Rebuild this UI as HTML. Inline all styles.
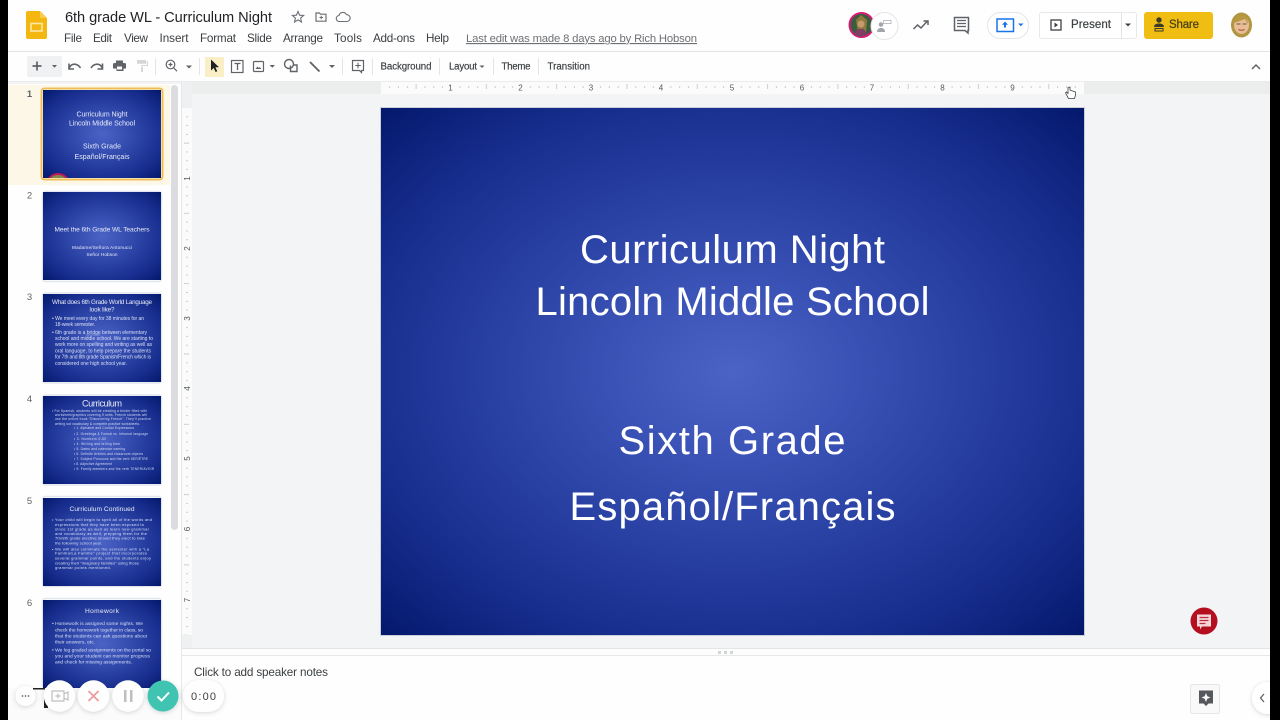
<!DOCTYPE html>
<html><head><meta charset="utf-8"><title>6th grade WL - Curriculum Night</title>
<style>
html,body{margin:0;padding:0;background:#000;width:1280px;height:720px;overflow:hidden}
svg{display:block;filter:blur(.35px)}
text{font-family:"Liberation Sans",sans-serif}
</style></head><body>
<svg xmlns="http://www.w3.org/2000/svg" width="1280" height="720" viewBox="0 0 1280 720">
<defs>
<radialGradient id="g" cx="0.5" cy="0.5" r="0.7">
<stop offset="0" stop-color="#4c63c6"/><stop offset="0.25" stop-color="#3a52b5"/><stop offset="0.5" stop-color="#2840a2"/><stop offset="0.75" stop-color="#182e8e"/><stop offset="1" stop-color="#04196e"/>
</radialGradient>
<filter id="b" x="-5%" y="-5%" width="110%" height="110%"><feGaussianBlur stdDeviation="0.2"/></filter>
<filter id="sh" x="-30%" y="-30%" width="160%" height="160%"><feDropShadow dx="0" dy="1" stdDeviation="2.500" flood-color="#000" flood-opacity=".16"/></filter>
<pattern id="hr" x="381" y="0" width="70.3" height="20" patternUnits="userSpaceOnUse">
<g fill="#c0c2c5"><rect x="8.3" y="6" width=".8" height="2"/><rect x="17.1" y="6" width=".8" height="2"/><rect x="25.9" y="6" width=".8" height="2"/><rect x="34.7" y="4" width=".8" height="5"/><rect x="43.5" y="6" width=".8" height="2"/><rect x="52.3" y="6" width=".8" height="2"/><rect x="61.1" y="6" width=".8" height="2"/></g>
</pattern>
<pattern id="vr" x="0" y="108" width="20" height="70.3" patternUnits="userSpaceOnUse">
<g fill="#c0c2c5"><rect x="186" y="8.3" width="2" height=".8"/><rect x="186" y="17.1" width="2" height=".8"/><rect x="186" y="25.9" width="2" height=".8"/><rect x="184" y="34.7" width="5" height=".8"/><rect x="186" y="43.5" width="2" height=".8"/><rect x="186" y="52.3" width="2" height=".8"/><rect x="186" y="61.1" width="2" height=".8"/></g>
</pattern>
<pattern id="vr2" x="180" y="108" width="20" height="70.3" patternUnits="userSpaceOnUse">
<g fill="#c0c2c5"><rect x="6" y="8.3" width="2" height=".8"/><rect x="6" y="17.1" width="2" height=".8"/><rect x="6" y="25.9" width="2" height=".8"/><rect x="4" y="34.7" width="5" height=".8"/><rect x="6" y="43.5" width="2" height=".8"/><rect x="6" y="52.3" width="2" height=".8"/><rect x="6" y="61.1" width="2" height=".8"/></g>
</pattern>
</defs>

<!-- base -->
<rect x="0" width="1280" height="720" fill="#fefefe"/>
<rect x="192" y="94" width="1078" height="554" fill="#f3f4f6"/>
<rect x="182" y="82" width="1088" height="12" fill="#eceded"/>
<rect x="182" y="82" width="10" height="566" fill="#eff0f1"/>
<rect x="8" y="51" width="1262" height="1" fill="#e2e3e5"/>
<rect x="8" y="81" width="1262" height="1" fill="#eaebec"/>
<rect x="181" y="82" width="1" height="638" fill="#e6e7e9"/>
<rect x="182" y="648" width="1088" height="7" fill="#fdfdfd"/>
<rect x="182" y="648" width="1088" height="1" fill="#e3e4e6"/>
<rect x="182" y="655" width="1088" height="1" fill="#e6e7e9"/>
<g fill="#d2d4d6"><rect x="718" y="651" width="3" height="3"/><rect x="724" y="651" width="3" height="3"/><rect x="730" y="651" width="3" height="3"/></g>
<rect x="8" y="82" width="173" height="2" fill="#f3f3f4"/>

<!-- header -->
<path d="M26 13a2 2 0 0 1 2-2h12l7 7v19a2 2 0 0 1-2 2H28a2 2 0 0 1-2-2z" fill="#f4b70f"/>
<path d="M40 11l7 7h-7z" fill="#f8cc4c"/>
<rect x="31" y="23.500" width="11" height="7.500" fill="none" stroke="#fbe7a8" stroke-width="1.600"/>
<text x="65" y="22" font-size="14.600" fill="#1f2124" textLength="207">6th grade WL - Curriculum Night</text>
<path d="M298 11.500l1.600 3.700 4 .3-3 2.600.9 3.900-3.500-2.100-3.500 2.100.9-3.900-3-2.600 4-.3z" fill="none" stroke="#6b6f74" stroke-width="1.100"/>
<path d="M316 13h3.500l1 1.200h5.500v7h-10z" fill="none" stroke="#6b6f74" stroke-width="1.200"/><path d="M319.500 17.500h3.500M321.200 15.800v3.400" stroke="#6b6f74" stroke-width="1"/>
<path d="M347 21.500h-7.500a3 3 0 0 1-.5-6 4 4 0 0 1 7.500-.8 3.400 3.400 0 0 1 .5 6.800z" fill="none" stroke="#6b6f74" stroke-width="1.100"/>
<g font-size="11.700" fill="#3c4043">
<text x="64" y="42" textLength="18">File</text><text x="93" y="42" textLength="19">Edit</text><text x="124" y="42" textLength="24">View</text><text x="159.500" y="42" textLength="29">Insert</text><text x="200" y="42" textLength="36">Format</text><text x="247" y="42" textLength="25">Slide</text><text x="283" y="42" textLength="40">Arrange</text><text x="334" y="42" textLength="28">Tools</text><text x="373" y="42" textLength="42">Add-ons</text><text x="426" y="42" textLength="23">Help</text>
<text x="466" y="42" font-size="11.300" textLength="231" fill="#6d7074" text-decoration="underline">Last edit was made 8 days ago by Rich Hobson</text>
</g>

<!-- header right -->
<circle cx="861.500" cy="25" r="12" fill="#3a5d42" stroke="#d81b75" stroke-width="2"/>
<path d="M856 20l5-5 6 5-1 13h-8z" fill="#8f7a3d"/><circle cx="861" cy="24" r="3.500" fill="#c89a6b"/><path d="M854 35l3-6h7l3 5-6 3z" fill="#7f3f62"/>
<circle cx="884.500" cy="26" r="13.500" fill="#fff" stroke="#e3e4e6"/>
<circle cx="881" cy="24.500" r="2.300" fill="#a3a6aa"/><path d="M877 32c0-3 1.800-4 4-4s4 1 4 4z" fill="#a3a6aa"/><rect x="883.500" y="20.500" width="7.500" height="3" fill="none" stroke="#b0b3b6" stroke-width=".8"/>
<path d="M913.500 29l4-4 3.500 3 6-6.500M923.500 21h4.500v4" fill="none" stroke="#5f6368" stroke-width="1.500"/>
<path d="M954.500 17.500h14v13h-.5v2.500l-3-2.500h-10.500z" fill="none" stroke="#5f6368" stroke-width="1.500"/><path d="M957 20.500h9M957 23.500h9M957 26.500h9" stroke="#5f6368" stroke-width="1.200"/>
<rect x="987.500" y="12.500" width="41" height="26" rx="13" fill="#fff" stroke="#e3e4e6"/>
<rect x="997" y="19" width="16.500" height="12.500" fill="none" stroke="#1a73e8" stroke-width="1.500"/><path d="M1005 21.500l-3 3.200h2v2.800h2v-2.800h2z" fill="#1a73e8"/><path d="M1018 23.500h5.500l-2.700 2.800z" fill="#1a73e8"/>
<rect x="1039.500" y="12.500" width="97" height="26" rx="2" fill="#fff" stroke="#e8e9ea"/><rect x="1121" y="12" width="1" height="27" fill="#e3e4e6"/>
<rect x="1051" y="20" width="10" height="10" fill="none" stroke="#3c4043" stroke-width="1.300"/><path d="M1054.500 22.500v5l3.500-2.500z" fill="#3c4043"/>
<text x="1071" y="28" font-size="11.500" fill="#3c4043" stroke="#3c4043" stroke-width=".2" textLength="40">Present</text>
<path d="M1125 23.500h6l-3 3z" fill="#3c4043"/>
<rect x="1144" y="12" width="69" height="27" rx="3" fill="#f0bd12"/>
<circle cx="1159" cy="20" r="2.700" fill="#3c3a2a"/><path d="M1154 27c0-2.500 2.200-3.500 5-3.500s5 1 5 3.500z" fill="#3c3a2a"/><path d="M1155 28.500h8v2.500h-8z" fill="none" stroke="#3c3a2a" stroke-width="1"/>
<text x="1169" y="28" font-size="11.500" fill="#4a4214" stroke="#4a4214" stroke-width=".25" textLength="30">Share</text>
<ellipse cx="1241.500" cy="25" rx="10.500" ry="12.500" fill="#b09640"/><ellipse cx="1241.500" cy="25" rx="7.500" ry="9" fill="#e8bd96"/><path d="M1234 23c1-6 6-9 9-7 3 1 5 4 5 8l-3-5z" fill="#b7973f"/><path d="M1236.500 24h4M1242.500 24h4" stroke="#6b5a44" stroke-width="1.100"/><path d="M1238.500 29.500q3 1.500 6 0" stroke="#a64f45" stroke-width="1" fill="none"/>

<!-- toolbar -->
<rect x="27" y="56" width="35" height="21" rx="2" fill="#f0f1f2"/>
<path d="M37 61.500v9M32.500 66h9" stroke="#5f6368" stroke-width="1.700"/>
<path d="M52 65h5l-2.500 2.800z" fill="#5f6368"/>
<path d="M69 69q1.500-5.500 6.500-4.700 3 .5 5 3.700M69 63.500v5.500h5" fill="none" stroke="#5f6368" stroke-width="1.600"/>
<path d="M102.500 69q-1.500-5.500-6.500-4.700-3 .5-5 3.700M102.500 63.500v5.500h-5" fill="none" stroke="#5f6368" stroke-width="1.600"/>
<path d="M116 60.500h7v2.500h1.500a1.500 1.500 0 0 1 1.500 1.500v4h-2.500v2.500h-7V68.500H113v-4a1.500 1.500 0 0 1 1.500-1.500h1.500z" fill="#5f6368"/><rect x="117" y="66.500" width="5" height="3" fill="#fefefe"/>
<rect x="137" y="60" width="9" height="3.800" fill="#d5d6d8"/><path d="M146 62h1.500v3.500H142v2" fill="none" stroke="#d5d6d8" stroke-width="1.100"/><rect x="141" y="67.500" width="2" height="4.500" fill="#d5d6d8"/>
<rect x="155" y="58" width="1" height="17" fill="#e4e5e7"/>
<circle cx="170.500" cy="64.500" r="4.300" fill="none" stroke="#5f6368" stroke-width="1.200"/><path d="M173.800 68l3.200 3.200M168.500 64.500h4M170.500 62.500v4" stroke="#5f6368" stroke-width="1.200"/>
<path d="M186 65.500h6l-3 3z" fill="#5f6368"/>
<rect x="199" y="58" width="1" height="17" fill="#e4e5e7"/>
<rect x="205" y="57" width="19" height="20" fill="#faeec6"/>
<path d="M211 59.500v11l2.700-2.500 1.900 4 1.700-.8-1.900-3.900h3.600z" fill="#202124"/>
<rect x="231.500" y="60.500" width="11.500" height="12" fill="none" stroke="#5f6368" stroke-width="1.200"/><path d="M234.500 63.500h6M237.500 63.500v6.500" stroke="#5f6368" stroke-width="1.300"/>
<rect x="253.500" y="61.500" width="10" height="10" rx="1" fill="none" stroke="#5f6368" stroke-width="1.200"/><path d="M255.500 69l2-2.500 1.300 1.500 1-1 1.500 2z" fill="#5f6368"/>
<path d="M269.500 65h5.500l-2.700 2.800z" fill="#5f6368"/>
<circle cx="289" cy="64" r="4.500" fill="none" stroke="#5f6368" stroke-width="1.400"/><path d="M290.500 65.500v6h6.500V65h-3.500" fill="none" stroke="#5f6368" stroke-width="1.400"/>
<path d="M310 62l9.500 9.500" stroke="#5f6368" stroke-width="1.900"/>
<path d="M329 65h6l-3 3z" fill="#5f6368"/>
<rect x="342" y="58" width="1" height="17" fill="#e4e5e7"/>
<path d="M352.500 60.500h11v10h-2v2l-2-2h-7z" fill="none" stroke="#5f6368" stroke-width="1.200"/><path d="M358 62.800v5.500M355.300 65.500h5.500" stroke="#5f6368" stroke-width="1.100"/>
<rect x="372" y="58" width="1" height="17" fill="#e4e5e7"/>
<g font-size="9.700" fill="#3c4043" stroke="#3c4043" stroke-width=".18">
<text x="380.500" y="69.500" textLength="51">Background</text><text x="449" y="69.500" textLength="28">Layout</text><text x="501.500" y="69.500" textLength="29">Theme</text><text x="547.500" y="69.500" textLength="42.500">Transition</text>
</g>
<path d="M479.500 65.500h5l-2.500 2.500z" fill="#5f6368"/>
<rect x="439" y="58" width="1" height="17" fill="#e4e5e7"/><rect x="493" y="58" width="1" height="17" fill="#e4e5e7"/><rect x="538" y="58" width="1" height="17" fill="#e4e5e7"/>
<path d="M1252 69l4-4 4 4" fill="none" stroke="#5f6368" stroke-width="1.500"/>

<!-- rulers -->
<rect x="381" y="82" width="703" height="12" fill="#fbfbfb"/>
<rect x="381" y="82" width="703" height="12" fill="url(#hr)"/>
<g font-size="8" fill="#55585c" text-anchor="middle">
<text x="450.500" y="90.500">1</text><text x="520.500" y="90.500">2</text><text x="591" y="90.500">3</text><text x="661" y="90.500">4</text><text x="732" y="90.500">5</text><text x="802" y="90.500">6</text><text x="872" y="90.500">7</text><text x="942.500" y="90.500">8</text><text x="1012.500" y="90.500">9</text>
</g>
<rect x="182" y="108" width="10" height="527" fill="#fbfbfb"/>
<rect x="182" y="108" width="10" height="527" fill="url(#vr2)"/>
<g font-size="8" fill="#55585c" text-anchor="middle">
<text transform="translate(190 178.500) rotate(-90)">1</text><text transform="translate(190 248.500) rotate(-90)">2</text><text transform="translate(190 318.500) rotate(-90)">3</text><text transform="translate(190 388.500) rotate(-90)">4</text><text transform="translate(190 458.500) rotate(-90)">5</text><text transform="translate(190 529) rotate(-90)">6</text><text transform="translate(190 600) rotate(-90)">7</text>
</g>
<!-- hand cursor -->
<path d="M1068 87.500v6l-1.500-1.500-1 1 3 5.500h6l1-3.500v-3l-1.500-.5-1.500-.5-1.500-.5-1-.5v-3z" fill="#fff" stroke="#3c4043" stroke-width=".8"/>

<!-- main slide -->
<rect x="380" y="107" width="705" height="529" fill="#c9ced8"/>
<rect x="381" y="108" width="703" height="527" fill="url(#g)"/>
<g fill="#fff" font-size="40" text-anchor="middle">
<text x="732.500" y="263" textLength="305">Curriculum Night</text>
<text x="732.500" y="315" textLength="394">Lincoln Middle School</text>
<text x="732" y="454" textLength="227">Sixth Grade</text>
<text x="732.500" y="520" textLength="326">Español/Français</text>
</g>
<!-- red comment bubble -->
<circle cx="1204" cy="621" r="13.500" fill="#b30f1f"/>
<path d="M1197 614.500h14v12h-9l-2 3v-3h-3z" fill="#f6d6d8"/><path d="M1199.500 617.500h9M1199.500 620.500h9M1199.500 623.500h6" stroke="#b8303e" stroke-width="1.300"/>

<!-- left panel -->
<rect x="8" y="85" width="162" height="100" fill="#fdf7e7"/>
<rect x="171" y="85" width="7" height="445" rx="3.500" fill="#dadce0"/>
<g font-size="9.500" fill="#5f6368" text-anchor="middle">
<text x="29.500" y="97" font-weight="700">1</text><text x="29.500" y="198.500">2</text><text x="29.500" y="300">3</text><text x="29.500" y="402">4</text><text x="29.500" y="504">5</text><text x="29.500" y="606">6</text>
</g>
<rect x="41.500" y="88.500" width="121" height="91" rx="3" fill="#fff" stroke="#eebe55" stroke-width="2"/>
<g fill="none" stroke="#e1e5ee" stroke-width="1.500">
<rect x="42.500" y="191.500" width="119" height="90" rx="3"/><rect x="42.500" y="293" width="119" height="90" rx="3"/><rect x="42.500" y="395" width="119" height="90" rx="3"/><rect x="42.500" y="496.500" width="119" height="90" rx="3"/><rect x="42.500" y="598.500" width="119" height="90" rx="3"/>
</g>
<g fill="url(#g)">
<rect x="43" y="90" width="118" height="88"/><rect x="43" y="192" width="118" height="88"/><rect x="43" y="294" width="118" height="88"/><rect x="43" y="396" width="118" height="88"/><rect x="43" y="498" width="118" height="88"/><rect x="43" y="600" width="118" height="88"/>
</g>
<g fill="#e6eaf8" filter="url(#b)" text-anchor="middle">
<g font-size="7">
<text x="102" y="116.500" textLength="51">Curriculum Night</text><text x="102" y="125.500" textLength="66">Lincoln Middle School</text><text x="102" y="148.500" textLength="38">Sixth Grade</text><text x="102" y="159" textLength="55">Español/Français</text>
</g>
<text x="102" y="231.500" font-size="6.600" textLength="95">Meet the 6th Grade WL Teachers</text>
<text x="102" y="249" font-size="4.700" textLength="60">Madame/Señora Antonucci</text><text x="102" y="256" font-size="4.700" textLength="31">Señor Hobson</text>
<text x="102" y="304" font-size="6.300" textLength="100">What does 6th Grade World Language</text><text x="102" y="311.500" font-size="6.300" textLength="25">look like?</text>
<text x="102" y="406.500" font-size="9.200" textLength="40">Curriculum</text>
<text x="102" y="511" font-size="6.600" textLength="65">Curriculum Continued</text>
<text x="102" y="613" font-size="6.600" textLength="34">Homework</text>
</g>
<g fill="#d8dff4" filter="url(#b)" font-size="5">
<text x="52" y="320" textLength="92">• We meet every day for 38 minutes for an</text><text x="55" y="326" textLength="40">18-week semester.</text>
<text x="52" y="334" textLength="95">• 6th grade is a bridge between elementary</text><text x="55" y="340" textLength="98">school and middle school.  We are starting to</text><text x="55" y="346" textLength="97">work more on spelling and writing as well as</text><text x="55" y="352.500" textLength="96">oral language, to help prepare the students</text><text x="55" y="358.500" textLength="96">for 7th and 8th grade Spanish/French which is</text><text x="55" y="365" textLength="72">considered one high school year.</text>
</g>
<path d="M86 335h14" stroke="#d8dff4" stroke-width=".4"/>
<g fill="#d8dff4" filter="url(#b)" font-size="3.200">
<text x="52" y="412" textLength="95">• For Spanish, students will be creating a binder filled with</text><text x="55" y="416" textLength="92">worksheet/graphics covering 9 units.  French students will</text><text x="55" y="420" textLength="96">use the online book "Discovering French".  They'll practice</text><text x="55" y="425" textLength="85">writing out vocabulary &amp; complete practice worksheets.</text>
<text x="74" y="429" textLength="60">• 1.  Alphabet and Cordial Expressions</text><text x="74" y="435" textLength="74">• 2.  Greetings &amp; Formal vs. Informal language</text><text x="74" y="440" textLength="32">• 3.  Numbers 0-50</text><text x="74" y="445" textLength="46">• 4.  Writing and telling time</text><text x="74" y="450" textLength="51">• 5.  Dates and calendar naming</text><text x="74" y="455" textLength="69">• 6.  Definite Articles and classroom objects</text><text x="74" y="460" textLength="74">• 7.  Subject Pronouns and the verb SER/ÊTRE</text><text x="74" y="465" textLength="38">• 8.  Adjective Agreement</text><text x="74" y="470" textLength="80">• 9.  Family members and the verb TENER/AVOIR</text>
</g>
<g fill="#d8dff4" filter="url(#b)" font-size="4">
<text x="52" y="521" textLength="100">• Your child will begin to spell all of the words and</text><text x="55" y="526" textLength="89">expressions that they have been exposed to</text><text x="55" y="530.500" textLength="94">since 1st grade as well as learn new grammar</text><text x="55" y="535" textLength="92">and vocabulary as well, prepping them for the</text><text x="55" y="539.500" textLength="90">7th/8th grade elective should they elect to take</text><text x="55" y="544.500" textLength="47">the following school year.</text>
<text x="52" y="550.500" textLength="97">• We will also culminate the semester with a "La</text><text x="55" y="554.500" textLength="92">Familia/La Famille" project that incorporates</text><text x="55" y="559.500" textLength="96">several grammar points, and the students enjoy</text><text x="55" y="564.500" textLength="84">creating their "imaginary families" using those</text><text x="55" y="569" textLength="56">grammar points mentioned.</text>
</g>
<g fill="#d8dff4" filter="url(#b)" font-size="4.900">
<text x="52" y="625" textLength="91">• Homework is assigned some nights.  We</text><text x="55" y="631.500" textLength="88">check the homework together in class, so</text><text x="55" y="637.500" textLength="92">that the students can ask questions about</text><text x="55" y="643.500" textLength="40">their answers, etc.</text>
<text x="52" y="651.500" textLength="99">• We log graded assignments on the portal so</text><text x="55" y="657.500" textLength="95">you and your student can monitor progress</text><text x="55" y="663.500" textLength="77">and check for missing assignments.</text>
</g>
<clipPath id="c1"><rect x="43" y="90" width="118" height="88"/></clipPath>
<circle cx="58" cy="185" r="11" fill="#7d8a4a" stroke="#c2185b" stroke-width="2" clip-path="url(#c1)"/>

<!-- bottom of panel / recorder -->
<rect x="8" y="688" width="173" height="32" fill="#fbfbfb"/>
<rect x="33" y="688" width="12" height="1.500" fill="#222"/><rect x="44" y="698" width="4" height="10" fill="#222"/>
<g filter="url(#sh)" fill="#fefefe">
<circle cx="25.500" cy="696" r="10"/><circle cx="59.500" cy="696" r="15.700"/><circle cx="93.500" cy="696" r="15.700"/><circle cx="128" cy="696" r="15.700"/>
<rect x="183" y="680" width="41" height="32" rx="16"/>
</g>
<circle cx="163" cy="696" r="15.500" fill="#3fc4b1" filter="url(#sh)"/>
<g fill="#6b6d70"><circle cx="22.500" cy="696" r=".9"/><circle cx="25.500" cy="696" r=".9"/><circle cx="28.500" cy="696" r=".9"/></g>
<path d="M52 691h12v10H52z" fill="none" stroke="#bcbec1" stroke-width="1.200"/><path d="M64 694l4-2v8l-4-2M58 693.500v5M55.500 696h5" fill="none" stroke="#bcbec1" stroke-width="1.200"/>
<path d="M88.500 691l10 10M98.500 691l-10 10" stroke="#ee9ba0" stroke-width="1.800"/>
<rect x="124" y="690" width="2.500" height="12" fill="#bcbec1"/><rect x="130" y="690" width="2.500" height="12" fill="#bcbec1"/>
<path d="M157.500 696.500l4 4 7.500-8" fill="none" stroke="#fff" stroke-width="2"/>
<text x="203.500" y="700" font-size="11" fill="#3c4043" text-anchor="middle" textLength="25">0:00</text>

<!-- notes -->
<text x="194" y="676" font-size="11.700" fill="#3c4043" textLength="134">Click to add speaker notes</text>
<rect x="1190.500" y="684.500" width="29" height="29" rx="2" fill="#f9f9f9" stroke="#e4e5e6"/>
<path d="M1199 690.500h14v13h-4.500l-2.500 2.500-2.500-2.500H1199z" fill="#55585c"/><path d="M1206 693l1.300 3.200 3.200 1.300-3.200 1.300-1.300 3.200-1.300-3.200-3.200-1.300 3.200-1.300z" fill="#fff"/>
<circle cx="1268" cy="698" r="16" fill="#fff" filter="url(#sh)"/>
<path d="M1264 694l-3.500 4 3.500 4" fill="none" stroke="#5f6368" stroke-width="1.300"/>

<!-- side bars -->
<rect x="-2" y="-2" width="10" height="724" fill="#000"/><rect x="1270" y="-2" width="12" height="724" fill="#000"/>
</svg>
</body></html>
